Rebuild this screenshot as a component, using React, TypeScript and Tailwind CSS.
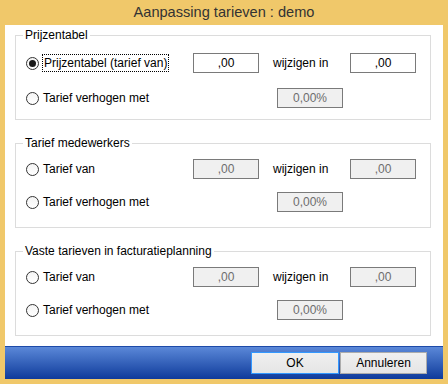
import React from "react";

function Radio({ checked }: { checked?: boolean }) {
  return (
    <span className="w-[13px] h-[13px] rounded-full border border-[#333333] bg-gradient-to-b from-[#f4f4f4] to-[#ffffff] flex items-center justify-center shrink-0">
      {checked && <span className="w-[7px] h-[7px] rounded-full bg-[#1a1a1a]" />}
    </span>
  );
}

function Box({ value, disabled }: { value: string; disabled?: boolean }) {
  return (
    <div
      className={
        "w-[66px] h-[20px] border border-[#7a7a7a] flex items-center justify-center shrink-0 " +
        (disabled ? "bg-[#f0f0f0] text-[#6d6d6d]" : "bg-white text-black")
      }
    >
      {value}
    </div>
  );
}

function Group({
  title,
  first,
  disabled,
  focus,
  pt,
  gap,
  pb,
}: {
  title: string;
  first: string;
  disabled?: boolean;
  focus?: boolean;
  pt: string;
  gap: string;
  pb: string;
}) {
  return (
    <fieldset className={"border border-[#dcdcdc] " + pb}>
      <legend className="ml-[7px] px-[2px] leading-[16px] text-black">{title}</legend>
      <div className={"flex flex-col pl-[10px] " + pt + " " + gap}>
        <div className="flex items-center h-[20px]">
          <div className="w-[167px] flex items-center gap-[4px]">
            <Radio checked={focus} />
            <span className={focus ? "outline outline-1 outline-dotted outline-black leading-[16px] px-[1px]" : "leading-[16px]"}>
              {first}
            </span>
          </div>
          <Box value=",00" disabled={disabled} />
          <div className="w-[91px] pl-[14px]">wijzigen in</div>
          <Box value=",00" disabled={disabled} />
        </div>
        <div className="flex items-center h-[20px]">
          <div className="w-[251px] flex items-center gap-[4px]">
            <Radio />
            <span className="leading-[16px]">Tarief verhogen met</span>
          </div>
          <Box value="0,00%" disabled />
        </div>
      </div>
    </fieldset>
  );
}

export default function App() {
  return (
    <div
      className="w-[448px] h-[384px] bg-[#f0c86a] flex flex-col text-[12px] text-black overflow-hidden"
      style={{ fontFamily: '"Liberation Sans", Arial, sans-serif' }}
    >
      <div className="h-[25px] flex items-center justify-center text-[14.6px] text-[#333333]">
        Aanpassing tarieven : demo
      </div>
      <div className="mx-[5px] flex-1 flex flex-col bg-white">
        <div className="flex-1 pl-[10px] pr-[12px] pt-[2px] flex flex-col gap-[15px]">
          <Group title="Prijzentabel" first="Prijzentabel (tarief van)" focus pt="pt-[10px]" gap="gap-[15px]" pb="pb-[11px]" />
          <Group title="Tarief medewerkers" first="Tarief van" disabled pt="pt-[8px]" gap="gap-[13px]" pb="pb-[15px]" />
          <Group title="Vaste tarieven in facturatieplanning" first="Tarief van" disabled pt="pt-[8px]" gap="gap-[13px]" pb="pb-[15px]" />
        </div>
        <div className="h-[33px] border-t border-[#1d4aa8] bg-gradient-to-b from-[#5b88d8] to-[#0f3a9b] flex items-center justify-end pr-[16px] gap-[1px]">
          <button className="w-[88px] h-[22px] border border-[#3399ff] bg-gradient-to-b from-[#f0f0f0] to-[#e5e5e5] text-black text-[12px]">
            OK
          </button>
          <button className="w-[87px] h-[22px] border border-[#acacac] bg-gradient-to-b from-[#f0f0f0] to-[#e5e5e5] text-black text-[12px]">
            Annuleren
          </button>
        </div>
      </div>
      <div className="h-[5px]" />
    </div>
  );
}
